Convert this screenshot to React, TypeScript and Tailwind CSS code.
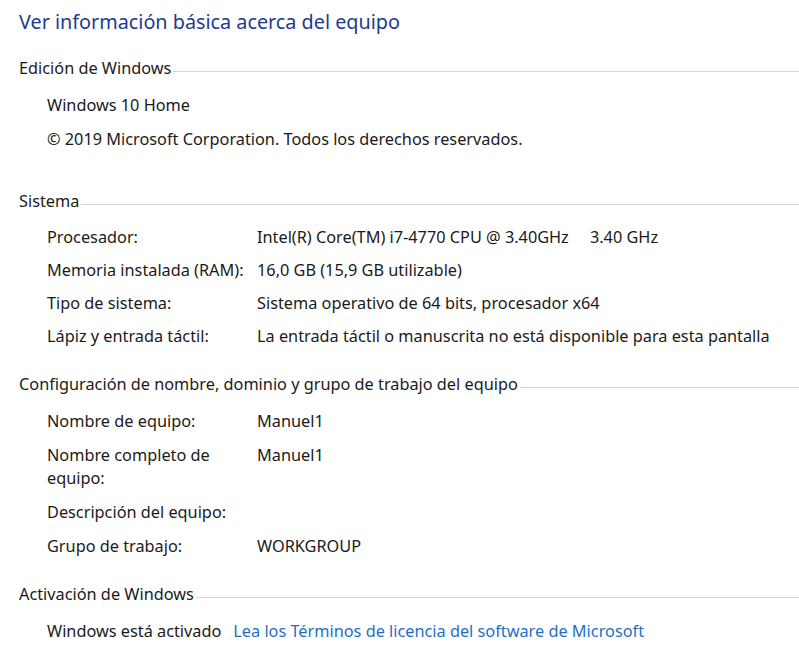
const font = { fontFamily: '"Segoe UI", "Noto Sans", sans-serif' };

function SectionHeader({ title, className }: { title: string; className?: string }) {
  return (
    <div className={`flex h-[24px] items-center pl-[19px] ${className ?? ""}`}>
      <span className="text-[16.3px] leading-[24px] text-[#1a1a1a]">{title}</span>
      <div className="ml-[2px] mt-[7px] h-px flex-1 bg-[#d5d5d5]" />
    </div>
  );
}

function Row({ label, value }: { label: string; value?: string }) {
  return (
    <div className="flex py-[5.5px] pl-[47px] text-[16.3px] leading-[23px] text-[#1a1a1a]">
      <div className="w-[210px] pr-3">{label}</div>
      <div className="flex-1 whitespace-pre">{value}</div>
    </div>
  );
}

export default function App() {
  return (
    <div className="h-[660px] w-[799px] overflow-hidden bg-white pt-[8px]" style={font}>
      <h1 className="h-[28px] pl-[19px] text-[19.8px] leading-[28px] text-[#1e3a8f]">
        Ver información básica acerca del equipo
      </h1>

      <SectionHeader title="Edición de Windows" className="mt-[20px]" />
      <div className="mt-[8px]">
        <div className="py-[5.5px] pl-[47px] text-[16.3px] leading-[23px] text-[#1a1a1a]">Windows 10 Home</div>
        <div className="py-[5.5px] pl-[47px] text-[16.3px] leading-[23px] text-[#1a1a1a]">
          © 2019 Microsoft Corporation. Todos los derechos reservados.
        </div>
      </div>

      <SectionHeader title="Sistema" className="mt-[33px]" />
      <div className="mt-[8px] [&>div]:py-[5px]">
        <Row label="Procesador:" value="Intel(R) Core(TM) i7-4770 CPU @ 3.40GHz     3.40 GHz" />
        <Row label="Memoria instalada (RAM):" value="16,0 GB (15,9 GB utilizable)" />
        <Row label="Tipo de sistema:" value="Sistema operativo de 64 bits, procesador x64" />
        <Row label="Lápiz y entrada táctil:" value="La entrada táctil o manuscrita no está disponible para esta pantalla" />
      </div>

      <SectionHeader title="Configuración de nombre, dominio y grupo de trabajo del equipo" className="mt-[19px]" />
      <div className="mt-[8px]">
        <Row label="Nombre de equipo:" value="Manuel1" />
        <div className="flex py-[5.5px] pl-[47px] text-[16.3px] leading-[23px] text-[#1a1a1a]">
          <div className="w-[210px] pr-8">Nombre completo de equipo:</div>
          <div className="flex-1">Manuel1</div>
        </div>
        <Row label="Descripción del equipo:" />
        <Row label="Grupo de trabajo:" value="WORKGROUP" />
      </div>

      <SectionHeader title="Activación de Windows" className="mt-[19px]" />
      <div className="mt-[8px] flex py-[5.5px] pl-[47px] text-[16.3px] leading-[23px]">
        <span className="text-[#1a1a1a]">Windows está activado</span>
        <a href="#" className="ml-[12px] text-[#1f6fc5]">
          Lea los Términos de licencia del software de Microsoft
        </a>
      </div>
    </div>
  );
}
